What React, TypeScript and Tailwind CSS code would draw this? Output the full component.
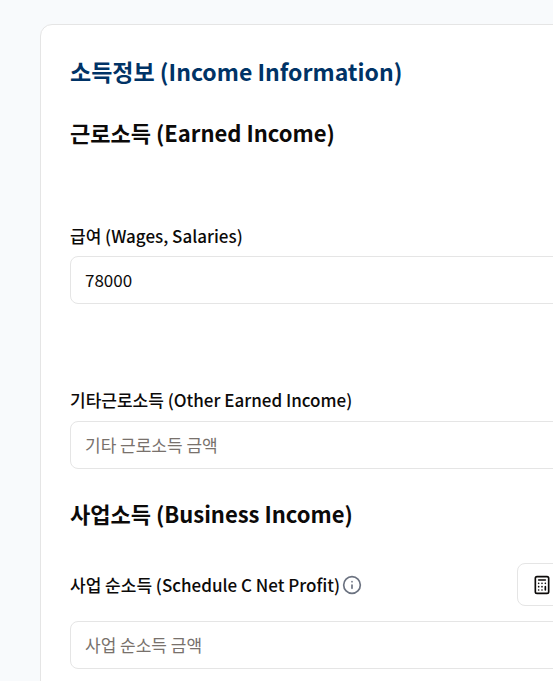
import type { InputHTMLAttributes, ReactNode } from "react";
import { Info } from "lucide-react";

function SectionTitle({ children }: { children: ReactNode }) {
  return <h3 className="text-[22px] leading-8 font-bold">{children}</h3>;
}

function FieldLabel({ htmlFor, children }: { htmlFor: string; children: ReactNode }) {
  return (
    <label htmlFor={htmlFor} className="text-[17px] leading-6 font-medium">
      {children}
    </label>
  );
}

function AmountInput(props: InputHTMLAttributes<HTMLInputElement>) {
  return (
    <input
      type="text"
      inputMode="numeric"
      className="block h-12 w-full rounded-lg border border-[#e5e5e5] bg-white px-[14px] pb-0.5 text-[17px] leading-6 placeholder:text-[#78716c]"
      {...props}
    />
  );
}

function CalculatorIcon() {
  return (
    <svg width="20" height="20" viewBox="0 0 24 24" fill="none" stroke="currentColor" strokeWidth="2" strokeLinecap="round" strokeLinejoin="round" aria-hidden="true">
      <rect x="4" y="2" width="16" height="20" rx="2" />
      <path d="M8 6h8M16 14v4M16 10h.01M12 10h.01M8 10h.01M12 14h.01M8 14h.01M12 18h.01M8 18h.01" />
    </svg>
  );
}

export default function App() {
  return (
    <main className="min-h-screen overflow-hidden bg-[#f8fafc] pt-6 pl-10 font-['Noto_Sans_CJK_KR',sans-serif] text-[#0c0a09]">
      <section className="-mr-24 rounded-xl border border-[#e5e5e5] bg-white px-[29px] pt-7 pb-8">
        <h2 className="text-[23px] leading-9 font-bold text-[#003366]">소득정보 (Income Information)</h2>

        <div className="mt-[27px]">
          <SectionTitle>근로소득 (Earned Income)</SectionTitle>
          <div className="mt-[76px] flex flex-col gap-2">
            <FieldLabel htmlFor="wages">급여 (Wages, Salaries)</FieldLabel>
            <AmountInput id="wages" defaultValue="78000" />
          </div>
          <div className="mt-[84px] flex flex-col gap-[9px]">
            <FieldLabel htmlFor="other-earned">기타근로소득 (Other Earned Income)</FieldLabel>
            <AmountInput id="other-earned" placeholder="기타 근로소득 금액" />
          </div>
        </div>

        <div className="mt-7">
          <SectionTitle>사업소득 (Business Income)</SectionTitle>
          <div className="mt-[34px] flex items-center justify-between">
            <div className="flex items-center gap-0.5">
              <FieldLabel htmlFor="business">사업 순소득 (Schedule C Net Profit)</FieldLabel>
              <Info size={20} className="text-[#6b7280]" aria-hidden="true" />
            </div>
            <button type="button" aria-label="계산기" className="flex h-[43px] w-[102px] items-center rounded-lg border border-[#e5e5e5] bg-white px-[14px]">
              <CalculatorIcon />
            </button>
          </div>
          <div className="mt-[15px]">
            <AmountInput id="business" placeholder="사업 순소득 금액" />
          </div>
        </div>
      </section>
    </main>
  );
}
